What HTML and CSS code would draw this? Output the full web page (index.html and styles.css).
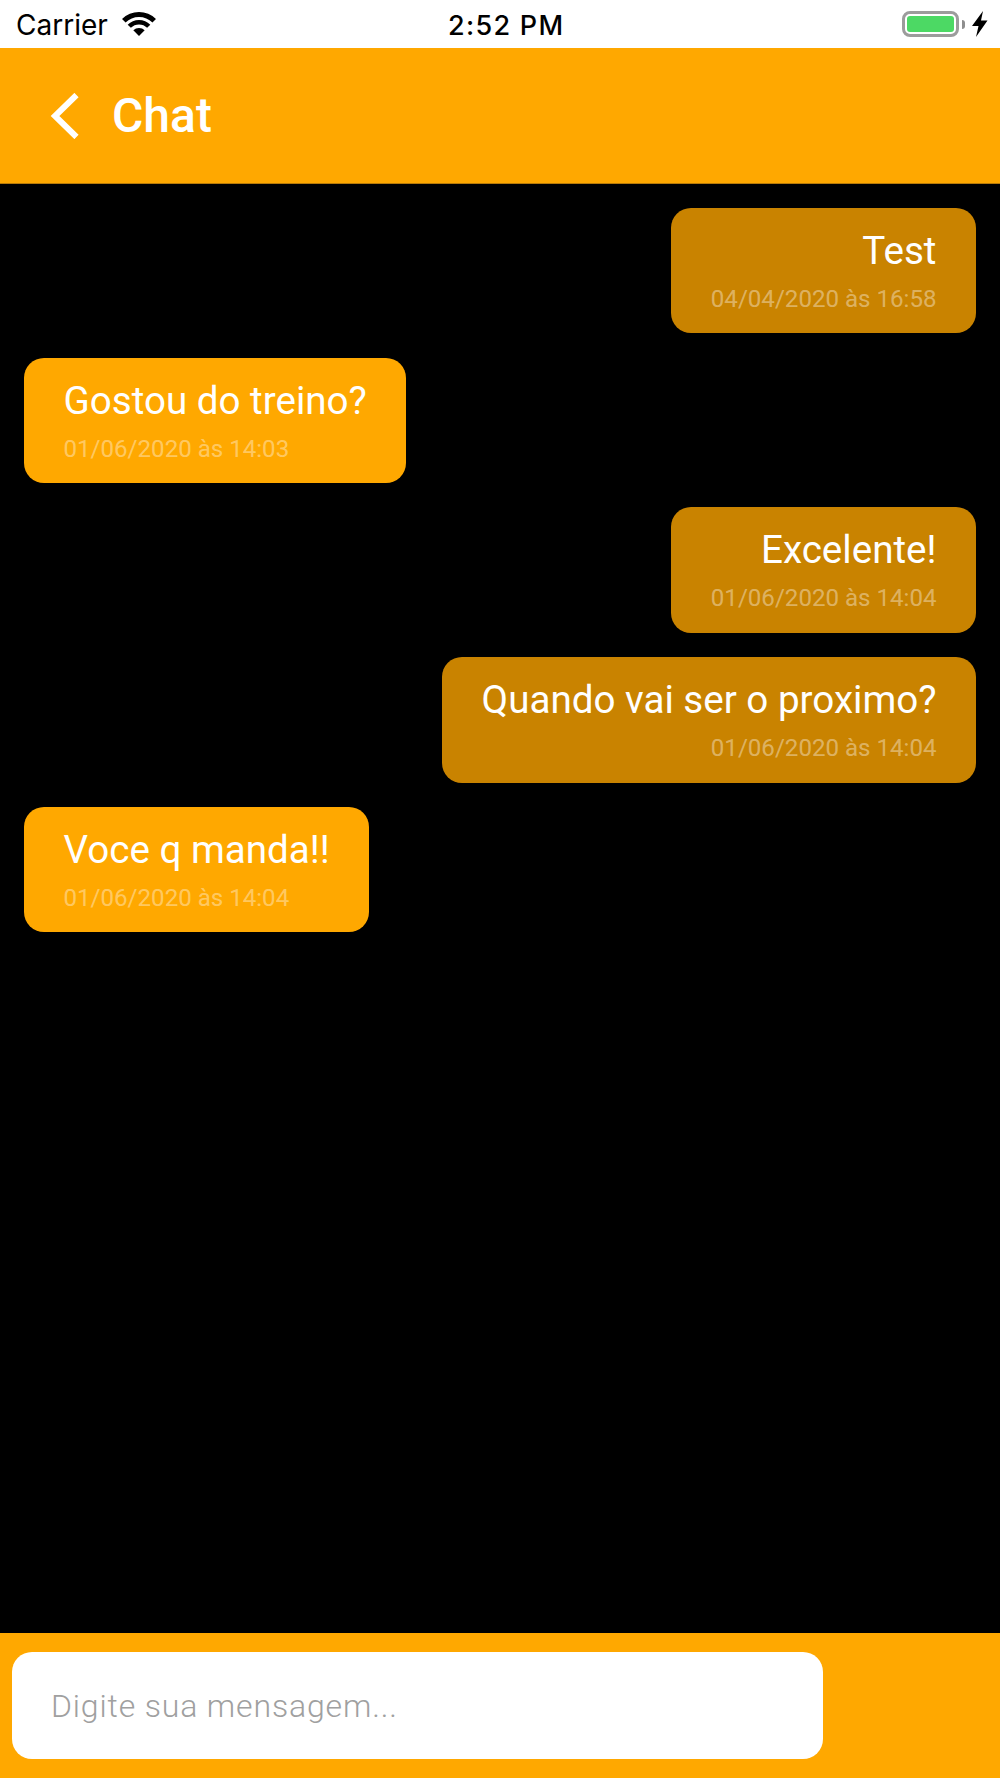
FILE: index.html
```html
<!DOCTYPE html>
<html lang="pt">
<head>
    <meta name="viewport" content="width=device-width, initial-scale=1.0" />
    <title>Chat</title>
    <link rel="stylesheet" href="styles.css">
</head>
<body>
    <div class="status-bar">
        <div class="status-left">
            <span class="carrier">Carrier</span>
            <svg class="wifi" width="34" height="24" viewBox="0 0 34 24">
                <path d="M17 24 L11.34 18.34 A8 8 0 0 1 22.66 18.34 Z" fill="#000" />
                <path d="M5.69 12.69 A16 16 0 0 1 28.31 12.69 L25.13 15.87 A11.5 11.5 0 0 0 8.87 15.87 Z" fill="#000" />
                <path d="M0.03 7.03 A24 24 0 0 1 33.97 7.03 L30.43 10.57 A19 19 0 0 0 3.57 10.57 Z" fill="#000" />
            </svg>
        </div>
        <span class="clock">2:52 PM</span>
        <div class="status-right">
            <div class="battery"><div class="battery-fill"></div></div>
            <div class="battery-cap"></div>
            <svg class="bolt" width="16" height="26" viewBox="0 0 16 26">
                <path d="M11 0 L0 15 H6.5 L4 26 L15.5 9.5 H9 Z" fill="#000" />
            </svg>
        </div>
    </div>

    <header class="chat-header">
        <svg class="back" width="30" height="46" viewBox="0 0 30 46">
            <path d="M26.5 2 L5 23 L26.5 44" fill="none" stroke="#fff" stroke-width="6" />
        </svg>
        <h1 class="chat-title">Chat</h1>
    </header>

    <main class="messages">
        <div class="bubble mine">
            <p class="msg-text">Test</p>
            <p class="msg-date">04/04/2020 às 16:58</p>
        </div>
        <div class="bubble theirs">
            <p class="msg-text">Gostou do treino?</p>
            <p class="msg-date">01/06/2020 às 14:03</p>
        </div>
        <div class="bubble mine">
            <p class="msg-text">Excelente!</p>
            <p class="msg-date">01/06/2020 às 14:04</p>
        </div>
        <div class="bubble mine">
            <p class="msg-text">Quando vai ser o proximo?</p>
            <p class="msg-date">01/06/2020 às 14:04</p>
        </div>
        <div class="bubble theirs">
            <p class="msg-text">Voce q manda!!</p>
            <p class="msg-date">01/06/2020 às 14:04</p>
        </div>
    </main>

    <footer class="composer">
        <div class="composer-input">Digite sua mensagem...</div>
    </footer>
</body>
</html>
```

FILE: styles.css
```css
* {
    padding: 0;
    margin: 0;
    box-sizing: border-box;
    font-family: "Roboto", sans-serif;
}

body {
    width: 1000px;
    height: 1778px;
    display: flex;
    flex-direction: column;
    background-color: #000;
    overflow: hidden;
}

.status-bar {
    height: 48px;
    flex: none;
    background-color: #fff;
    color: #000;
    display: flex;
    align-items: center;
    padding: 0 12px 0 16px;
}

.status-left {
    width: 432px;
    flex: none;
    display: flex;
    align-items: center;
    gap: 14px;
}

.carrier {
    font-family: "Inter", sans-serif;
    font-size: 28px;
    margin-top: 2px;
}

.clock {
    font-family: "Inter", sans-serif;
    font-size: 27px;
    font-weight: 500;
    letter-spacing: 1.3px;
    margin-top: 2px;
}

.status-right {
    margin-left: auto;
    display: flex;
    align-items: center;
}

.battery {
    width: 57px;
    height: 26px;
    border: 3px solid #9c9c9c;
    border-radius: 8px;
    padding: 2px;
}

.battery-fill {
    height: 100%;
    background-color: #4cd964;
    border-radius: 3px;
}

.battery-cap {
    width: 3px;
    height: 9px;
    margin-left: 3px;
    background-color: #8e8e8e;
    border-radius: 0 3px 3px 0;
}

.bolt {
    margin-left: 7px;
}

.chat-header {
    height: 136px;
    flex: none;
    background-color: #ffa800;
    display: flex;
    align-items: center;
    padding-left: 50px;
    gap: 32px;
    border-bottom: 1px solid #b87a08;
}

.chat-title {
    font-size: 48px;
    font-weight: 500;
    color: #fff;
}

.messages {
    flex: 1;
    display: flex;
    flex-direction: column;
    gap: 24.13px;
    padding: 23.9px 24px;
}

.bubble {
    height: 125.6px;
    padding: 20px 39.5px 0;
    border-radius: 20px;
    color: #fff;
}

.bubble.mine {
    align-self: flex-end;
    background-color: #c98300;
    text-align: right;
}

.bubble.theirs {
    align-self: flex-start;
    background-color: #ffa800;
}

.msg-text {
    font-size: 38.6px;
    line-height: 46px;
}

.msg-date {
    font-size: 24.1px;
    line-height: 30px;
    margin-top: 10px;
    color: rgba(255, 255, 255, 0.4);
}

.composer {
    height: 145px;
    flex: none;
    background-color: #ffa800;
    padding: 19px 0 0 12px;
}

.composer-input {
    width: 811px;
    height: 107px;
    background-color: #fff;
    border-radius: 20px;
    padding-left: 39px;
    display: flex;
    align-items: center;
    font-size: 32px;
    font-weight: 300;
    letter-spacing: 0.85px;
    color: #a0a0a0;
}
```
